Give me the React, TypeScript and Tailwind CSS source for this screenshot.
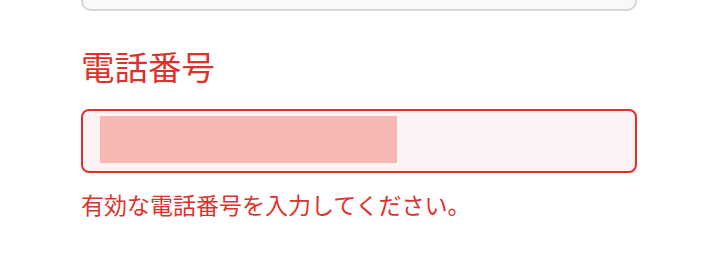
export default function App() {
  return (
    <div className="w-[712px] h-[262px] bg-white overflow-hidden" style={{ fontFamily: '"Noto Sans CJK JP", "Noto Sans", sans-serif' }}>
      <div className="ml-[81px] w-[556px] flex flex-col">
        <div className="mt-[-52px] h-[63px] rounded-[10px] border-2 border-[#d6d6d6] bg-[#f9f9f9]" />
        <div className="mt-[33px] text-[33.5px] leading-[44px] text-[#e0302a]">電話番号</div>
        <div className="mt-[21px] h-[64px] rounded-[8px] border-2 border-[#e0302a] bg-[#fdf3f4] pl-[17px] pt-[5px]">
          <div className="w-[297px] h-[47px] bg-[#f6b8b3]" />
        </div>
        <div className="mt-[15px] text-[23px] leading-[32px] text-[#e0302a]">有効な電話番号を入力してください。</div>
      </div>
    </div>
  );
}
